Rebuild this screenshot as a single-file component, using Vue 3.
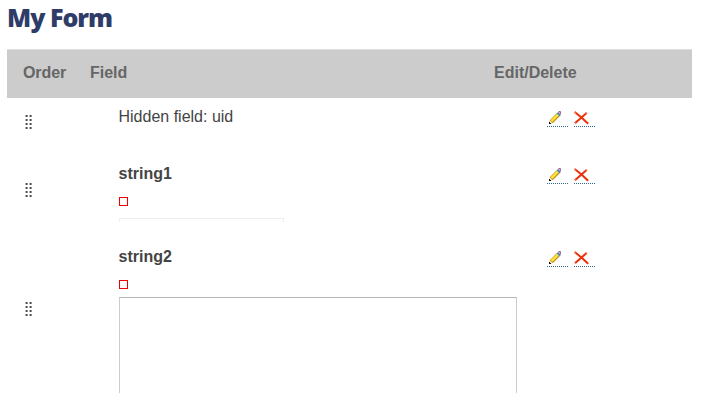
<script setup>
const rows = [
  { id: 'uid', label: 'Hidden field: uid', type: 'hidden' },
  { id: 'string1', label: 'string1', type: 'text' },
  { id: 'string2', label: 'string2', type: 'area' }
]
const dots = [0, 4, 8, 12]
</script>

<template>
  <main class="page">
    <h1 class="title">My Form</h1>
    <div class="head">
      <span class="narrow">Order</span>
      <span>Field</span>
      <span>Edit/Delete</span>
    </div>
    <div v-for="row in rows" :key="row.id" class="row" :class="row.type">
      <div class="order">
        <svg class="handle" width="8" height="14" viewBox="0 0 8 14">
          <g v-for="y in dots" :key="y">
            <rect x="0.6" :y="y" width="2" height="2" fill="#4c4c4c" />
            <rect x="4.6" :y="y" width="2" height="2" fill="#4c4c4c" />
          </g>
        </svg>
      </div>
      <div class="field">
        <div class="label">{{ row.label }}</div>
        <span v-if="row.type !== 'hidden'" class="required"></span>
        <div v-if="row.type !== 'hidden'" class="control"></div>
      </div>
      <div class="actions">
        <a class="action">
          <svg width="16" height="16" viewBox="0 0 16 16">
            <path d="M3 10 10.4 2.6 13.4 5.6 6.2 12.8 2.4 13.8Z" fill="#c98a18" />
            <path d="M3.6 10.2 10.7 3.1 12.4 4.8 5.3 11.9Z" fill="#ffe53a" />
            <path d="M3 10.4 5.4 12.8 2.6 13.6Z" fill="#f5e3c2" />
            <path d="M2 12h1v1h1v1H2Z" fill="#111" />
            <path d="M9.8 3.4 11 2.2 13.8 5 12.6 6.2Z" fill="#3388cf" />
            <path d="M11 2.2 12 1H13.2L14 1.8V4L13.2 4.6Z" fill="#94608f" />
            <path d="M11.8 2h1.4v1.6h-1.4Z" fill="#d5a5d3" />
          </svg>
        </a>
        <a class="action">
          <svg width="16" height="16" viewBox="0 0 16 16">
            <path d="M1 2.2 7.5 7.6 14.2 13.8M12.6 3 7.5 7.4 1.2 13" fill="none" stroke="#ea3008" stroke-width="2" />
            <path d="M.6 1.8 2.2 3.2M12.8 2.8 11.6 3.8M.9 13.3 1.6 12.6" fill="none" stroke="#fb6747" stroke-width="2" />
          </svg>
        </a>
      </div>
    </div>
  </main>
</template>

<style>
body {
  margin: 0;
  background: #fff;
}
</style>

<style scoped>
.page {
  box-sizing: border-box;
  width: 701px;
  height: 406px;
  padding: 0 9px 0 7px;
  font-family: "Liberation Sans", Arial, sans-serif;
  font-size: 16px;
  line-height: 20px;
  color: #444;
}
.title {
  margin: 0;
  height: 49px;
  font-family: "Open Sans", "Noto Sans", sans-serif;
  font-size: 25px;
  font-weight: 800;
  line-height: 34px;
  letter-spacing: -1px;
  color: #2f3c68;
}
.head,
.row {
  display: grid;
  grid-template-columns: 67px 404px 1fr;
  box-sizing: border-box;
}
.head {
  height: 49px;
  padding: 13px 0 0 16px;
  border-top: 1px solid #dedede;
  background: #ccc;
  color: #666;
  font-weight: bold;
}
.narrow {
  letter-spacing: -0.1px;
}
.row {
  padding-left: 16px;
}
.hidden {
  height: 57px;
}
.text {
  height: 83px;
}
.area {
  height: 155px;
}
.order {
  padding: 17px 0 0 2px;
}
.text .order {
  padding-top: 28px;
}
.area .order {
  padding-top: 64px;
}
.handle {
  display: block;
}
.field {
  padding: 9px 0 0 28px;
}
.label {
  padding-left: 0.5px;
}
.text .label,
.area .label {
  font-weight: bold;
}
.required {
  display: block;
  box-sizing: border-box;
  width: 9px;
  height: 9px;
  margin: 13px 0 0 1px;
  border: 1px solid #f00000;
}
.control {
  box-sizing: border-box;
  margin-left: 1px;
}
.text .control {
  width: 165px;
  height: 4px;
  margin-top: 12px;
  border: 1px solid #eee;
  border-bottom: 0;
}
.area .control {
  width: 398px;
  height: 96px;
  margin-top: 8px;
  border: 1px solid #ccc;
  border-top-color: #b5b5b5;
  border-bottom: 0;
}
.actions {
  display: flex;
  align-items: flex-start;
  gap: 6px;
  padding: 12px 0 0 53px;
}
.action {
  width: 21px;
  height: 17px;
  background: repeating-linear-gradient(90deg, #2c6694 0 1px, #fff 1px 2px) left bottom / 21px 1px no-repeat;
}
.action svg {
  display: block;
}
</style>
